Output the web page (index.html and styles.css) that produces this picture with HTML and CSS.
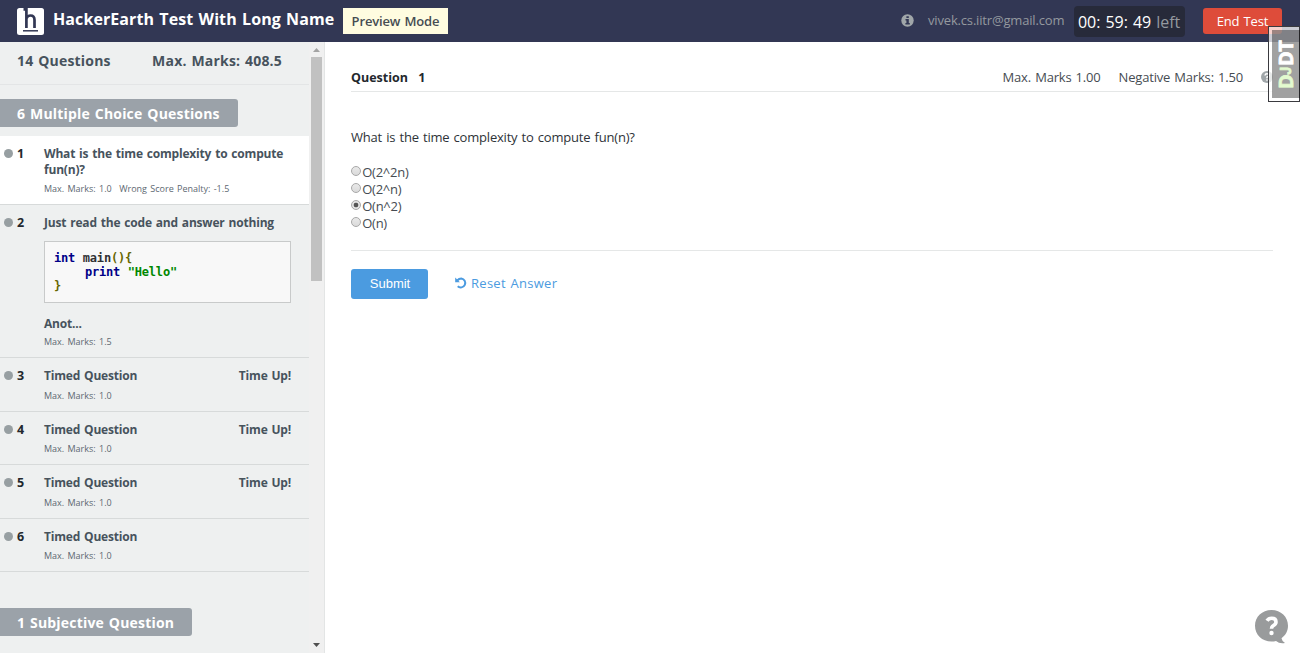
FILE: index.html
```html
<!DOCTYPE html>
<html lang="en">
<head>
<meta charset="utf-8">
<title>HackerEarth Test With Long Name</title>
<link rel="stylesheet" href="styles.css">
</head>
<body>
<header class="topbar">
  <svg class="logo" width="27" height="27" viewBox="0 0 27 27"><rect width="27" height="27" rx="2.5" fill="#fff"/><path d="M6.500 1.300H9.400V20M9.400 10.500Q10.500 7.500 13.500 7.500Q17.500 7.500 17.500 12V20" fill="none" stroke="#323754" stroke-width="2.700"/><path d="M6 22.800H21" stroke="#323754" stroke-width="1.500"/></svg>
  <h1 class="test-name">HackerEarth Test With Long Name</h1>
  <span class="preview">Preview Mode</span>
  <div class="account">
    <svg class="info" width="13" height="13" viewBox="0 0 13 13"><circle cx="6.5" cy="6.5" r="6.2" fill="#a0a6a9"/><path d="M5.4 2.2h2.4v1.7H5.4zM4.5 5h3.3v4.1h1v1.4H4.4V9.100h1V6.400h-.9z" fill="#323754"/></svg>
    <span class="email">vivek.cs.iitr@gmail.com</span>
    <span class="timer">00: 59: 49 <span class="left">left</span></span>
    <button class="end">End Test</button>
  </div>
</header>
<div class="layout">
  <aside class="sidebar">
    <div class="list">
      <div class="totals"><span>14 Questions</span><span>Max. Marks: 408.5</span></div>
      <h2 class="section first">6 Multiple Choice Questions</h2>
      <article class="item active"><i class="dot"></i><b class="num">1</b><div class="body"><p class="name">What is the time complexity to compute fun(n)?</p><p class="meta"><span>Max. Marks: 1.0</span><span>Wrong Score Penalty: -1.5</span></p></div></article>
      <article class="item code-item"><i class="dot"></i><b class="num">2</b><div class="body"><p class="name">Just read the code and answer nothing</p><pre class="code"><span class="kw">int</span> main<span class="br">(){</span>
    <span class="kw">print</span> <span class="str">"Hello"</span>
<span class="br">}</span></pre><p class="name">Anot...</p><p class="meta">Max. Marks: 1.5</p></div></article>
      <article class="item timed"><i class="dot"></i><b class="num">3</b><div class="body"><p class="name">Timed Question<span>Time Up!</span></p><p class="meta">Max. Marks: 1.0</p></div></article>
      <article class="item timed"><i class="dot"></i><b class="num">4</b><div class="body"><p class="name">Timed Question<span>Time Up!</span></p><p class="meta">Max. Marks: 1.0</p></div></article>
      <article class="item timed"><i class="dot"></i><b class="num">5</b><div class="body"><p class="name">Timed Question<span>Time Up!</span></p><p class="meta">Max. Marks: 1.0</p></div></article>
      <article class="item timed"><i class="dot"></i><b class="num">6</b><div class="body"><p class="name">Timed Question</p><p class="meta">Max. Marks: 1.0</p></div></article>
      <h2 class="section second">1 Subjective Question</h2>
    </div>
    <div class="scroll">
      <svg width="15" height="15" viewBox="0 0 15 15"><path d="M4 10L7.500 6L11 10z" fill="#a3a3a3"/></svg>
      <div class="thumb"></div>
      <svg class="down" width="15" height="15" viewBox="0 0 15 15"><path d="M4 5L7.500 9L11 5z" fill="#505050"/></svg>
    </div>
  </aside>
  <main class="main">
    <div class="heading"><b class="qno">Question <span>1</span></b><span class="mm">Max. Marks 1.00</span><span class="nm">Negative Marks: 1.50</span>
      <svg width="12" height="12" viewBox="0 0 12 12"><circle cx="6" cy="6" r="6" fill="#a0a6a9"/><path d="M4 4.500Q4.200 2.700 6 2.700Q8 2.700 8 4.300Q8 5.300 6 6.100V7.300M6 8.300V9.800" fill="none" stroke="#fff" stroke-width="1.500"/></svg>
    </div>
    <p class="prompt">What is the time complexity to compute fun(n)?</p>
    <div class="options">
      <label><i class="radio"></i>O(2^2n)</label>
      <label><i class="radio"></i>O(2^n)</label>
      <label><i class="radio on"></i>O(n^2)</label>
      <label><i class="radio"></i>O(n)</label>
    </div>
    <div class="actions"><button class="submit">Submit</button>
      <a class="reset"><svg width="12" height="12" viewBox="0 0 12 12"><path d="M2.200 3.500Q4 1.500 6.300 1.500A4.500 4.500 0 1 1 2.700 9.300" fill="none" stroke="#4b9be0" stroke-width="2"/><path d="M.2.500V5.200H4.900z" fill="#4b9be0"/></svg>Reset Answer</a></div>
  </main>
</div>
<div class="djdt"><div class="djdt-in"><span class="dj">D<span class="j">J</span></span>DT</div></div>
<svg class="help" width="34" height="34" viewBox="0 0 34 34"><path d="M16.500 0C26 0 33 6.800 33 15.800C33 21 30.500 25.500 26.500 28.300Q27 31.500 30 33Q24.500 34 21 31Q19 31.600 16.500 31.600C7 31.600 0 24.800 0 15.800S7 0 16.500 0Z" fill="#999b9c"/><path d="M12 10.800Q13.500 8.300 16.700 8.300Q21 8.300 21 11.900Q21 14 18.500 15.500Q16.500 16.700 16.500 18.800" fill="none" stroke="#fff" stroke-width="3.600"/><circle cx="16.500" cy="23" r="2.200" fill="#fff"/></svg>
</body>
</html>
```
FILE: styles.css
```css
* { box-sizing: border-box; }
body { margin: 0; width: 1300px; height: 653px; overflow: hidden; font: 13px/16px "Open Sans", sans-serif; color: #464c52; word-spacing: 1px; background: #fff; }
h1, h2, p, pre { margin: 0; }
button { border: 0; padding: 0; word-spacing: 1px; }
.topbar { height: 42px; background: #323754; display: flex; align-items: flex-start; padding-left: 17px; }
.logo { margin-top: 8px; }
.test-name { width: 290px; margin-left: 9px; padding-top: 7px; font-size: 16px; line-height: 25px; letter-spacing: .09px; color: #fff; white-space: nowrap; }
.preview { width: 105px; height: 26px; margin-top: 8px; background: #fffce0; text-align: center; line-height: 26px; font-weight: 600; letter-spacing: -.15px; }
.account { display: flex; align-items: flex-start; margin-left: auto; padding-right: 18px; color: #94999f; white-space: nowrap; }
.info { margin: 14px 14px 0 0; }
.email { width: 146px; line-height: 20px; padding-top: 10px; letter-spacing: -.17px; }
.timer { width: 111px; height: 31px; margin-top: 6px; padding-left: 4px; border-radius: 4px; background: #272a3a; color: #fff; font-size: 16px; line-height: 32px; letter-spacing: -.05px; }
.left { color: #94999f; }
.end { width: 79px; height: 26px; margin: 8px 0 0 18px; border-radius: 3px; background: #de4c3a; color: #fff; font: 13px/26px "Open Sans", sans-serif; letter-spacing: -.15px; }
.layout { display: flex; height: 611px; }
.sidebar { width: 325px; display: flex; background: #f0f0f0; border-right: 1px solid #e3e5e5; }
.list { width: 309px; background: #eef0f0; overflow: hidden; }
.totals { height: 43px; padding: 9px 27px 0 17px; border-bottom: 1px solid #e3e5e6; display: flex; justify-content: space-between; font-size: 14px; line-height: 20px; letter-spacing: .19px; font-weight: 700; color: #47535d; }
.section { width: fit-content; height: 28px; padding: 0 18px 0 17px; border-radius: 0 3px 3px 0; background: #9ba2a9; color: #fff; font-size: 14px; line-height: 29px; letter-spacing: .19px; }
.first { margin: 14px 0 9px; }
.second { margin-top: 36px; }
.item { display: flex; padding: 10px 17px 0 4px; border-bottom: 1px solid #d7dada; color: #47535d; }
.active { height: 69px; background: #fff; }
.code-item { height: 153px; }
.timed { height: 53.500px; }
.dot { width: 9px; height: 9px; margin: 3.400px 4px 0 0; border-radius: 50%; background: #979fa2; }
.num { width: 27px; font-size: 12.500px; color: #23282d; }
.body { flex: 1; }
.name { font-size: 12px; line-height: 16px; letter-spacing: -.19px; font-weight: 700; display: flex; justify-content: space-between; }
.name span { margin-right: 1px; }
.meta { margin-top: 5px; font-size: 9px; line-height: 12px; display: flex; gap: 7.500px; color: #5d6871; }
.code { height: 62px; margin: 10px 1px 13px 0; padding: 9px 9px; border: 1px solid #c8caca; background: #f8f8f8; font: bold 12px/14px "DejaVu Sans Mono", monospace; letter-spacing: -.2px; word-spacing: .7px; color: #303033; }
.code-item .meta { margin-top: 4px; }
.timed .meta { margin-top: 5.700px; }
.kw { color: #000088; } .br { color: #666600; } .str { color: #008800; }
.scroll { width: 15px; display: flex; flex-direction: column; }
.scroll svg { flex: none; }
.thumb { height: 224px; margin-left: 2px; width: 11px; background: #c1c1c1; }
.down { margin-top: auto; }
.main { width: 949px; padding: 0 0 0 26px; }
.heading { width: 922px; height: 50px; padding-top: 25px; border-bottom: 1px solid #e5e7e7; display: flex; line-height: 20px; letter-spacing: -.19px; }
.qno { margin-right: auto; color: #23282d; font-size: 12.500px; line-height: 21px; letter-spacing: 0; } .qno span { margin-left: 6px; }
.mm { margin-right: 18px; } .nm { margin-right: 18px; }
.heading svg { margin-top: 4px; }
.prompt { margin-top: 36px; line-height: 18px; letter-spacing: -.2px; color: #2e3338; }
.options { width: 922px; margin-top: 17px; padding-bottom: 19px; border-bottom: 1px solid #e5e7e7; letter-spacing: -.25px; }
.options label { display: flex; height: 17px; line-height: 19px; }
.radio { width: 10px; height: 10px; margin: 3px 1.200px 0 0; border: 1px solid #a8a8a8; border-radius: 50%; background: linear-gradient(#e9e9e9, #dadada); }
.on { background: radial-gradient(circle, #555 0 2px, #e4e4e4 2.700px); }
.actions { display: flex; margin-top: 18px; }
.submit { width: 77px; height: 30px; padding: 0 0 2px 1px; border-radius: 3px; background: #4b9be0; color: #fff; font: 13px "Liberation Sans", Arial, sans-serif; }
.reset { display: flex; margin-left: 27px; color: #4b9be0; line-height: 29px; letter-spacing: .28px; }
.reset svg { margin: 8px 4px 0 0; }
.djdt { position: absolute; left: 1268px; top: 26px; width: 32px; height: 76px; border: 1px solid #3a3a3f; background: rgba(255,255,255,.75); padding: 3px 0 3px 3px; }
.djdt-in { width: 28px; height: 68px; background: rgba(0,0,0,.37); writing-mode: vertical-rl; transform: rotate(180deg); color: #fff; font: bold 20px/28px "Open Sans", sans-serif; letter-spacing: -.6px; padding-top: 9px; -webkit-text-stroke: .8px; }
.dj { color: #e3fbcf; } .j { font: bold 14px/28px Roboto, sans-serif; letter-spacing: 1px; }
.help { position: absolute; left: 1255px; top: 610px; }
```
